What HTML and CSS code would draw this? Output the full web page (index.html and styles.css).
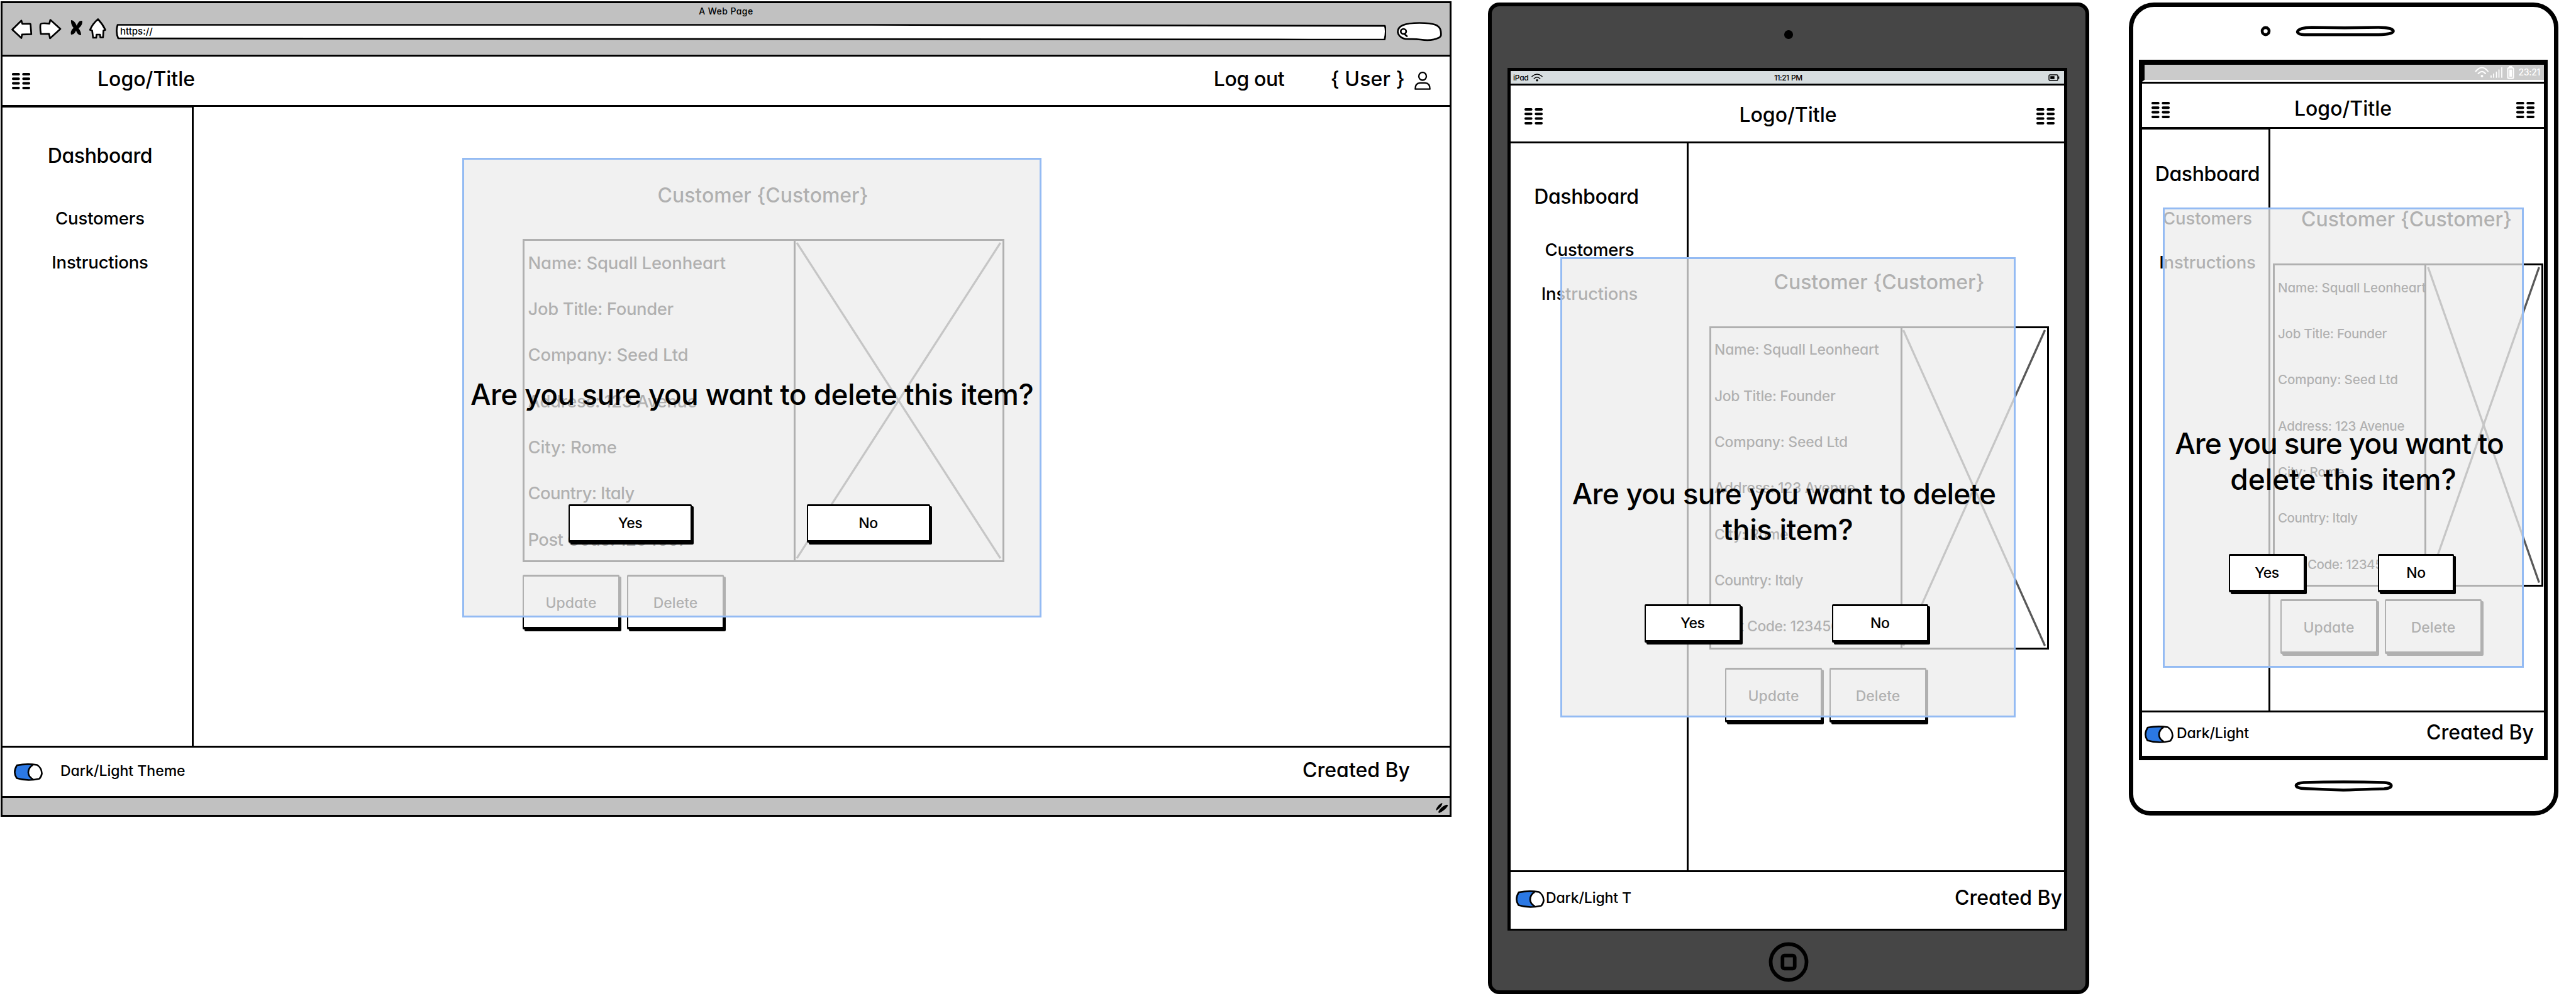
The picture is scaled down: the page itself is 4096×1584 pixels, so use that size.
FILE: index.html
```html
<!DOCTYPE html>
<html lang="en">
<head>
<meta charset="utf-8">
<title>Delete customer wireframes</title>
<link rel="stylesheet" href="styles.css">
</head>
<body>
<svg class="defs" width="0" height="0" aria-hidden="true">
  <symbol id="menu" viewBox="0 0 29 26">
    <g fill="#000">
      <rect x="0" y="0" width="12.6" height="4" rx="1.8"/><rect x="16.4" y="0" width="12.6" height="4" rx="1.8"/>
      <rect x="0" y="7.3" width="12.6" height="4" rx="1.8"/><rect x="16.4" y="7.3" width="12.6" height="4" rx="1.8"/>
      <rect x="0" y="14.6" width="12.6" height="4" rx="1.8"/><rect x="16.4" y="14.6" width="12.6" height="4" rx="1.8"/>
      <rect x="0" y="21.9" width="12.6" height="4" rx="1.8"/><rect x="16.4" y="21.9" width="12.6" height="4" rx="1.8"/>
    </g>
  </symbol>
  <symbol id="toggle" viewBox="0 0 47 28">
    <path d="M6 3Q22 0 38 2.5Q45 7 46 16Q45 21 41.4 24.6Q22 29 5.5 23.5Q-1 14 6 3Z" fill="#2b78e4"/>
    <path d="M31 2.6Q24 7 24 14.5Q24 21 31.5 25.5L41.4 24.6Q45 21 46 16Q45 7 38 2.5Z" fill="#fff"/>
    <path d="M6 3Q22 0 38 2.5Q45 7 45.6 16Q45 21 41.4 24.6Q22 29 5.5 23.5Q-1 14 6 3ZM31 2.6Q24 7 24 14.5Q24 21 31.5 25.5" fill="none" stroke="#000" stroke-width="2.6" stroke-linejoin="round"/>
  </symbol>
</svg>

<main class="board">

  <section class="browser">
    <div class="chrome">
      <div class="chrome-title">A Web Page</div>
      <div class="chrome-tools">
        <svg class="back" width="34" height="32" viewBox="0 0 34 32"><path d="M1.5 16L16 1.8L17.5 7L29 6.8Q30.5 6.8 30.6 8L31.8 23.4L17 23.8L16 29.6Z"/></svg>
        <svg class="forward" width="36" height="33" viewBox="0 0 36 33"><path d="M34 16L18 1.6L16.5 7.6Q3 5.800 2.300 9Q1.500 15 3 24L16 23.800L17.500 31Z"/></svg>
        <svg class="stop" width="19" height="25" viewBox="0 0 19 25"><path class="ink" d="M1 0C5 0 8 4 10 9C12 4 14 .5 18.500 1C20 6 16 11 13 13C15 16 17 19 17 24C13 24 10 21 9 16.500C7 21 5 23 1 23C-.5 18 3 14 5 12.500C2 9 .5 5 1 0Z"/></svg>
        <svg class="home" width="27" height="33" viewBox="0 0 27 33"><path d="M13.800 1.500Q21 9 25.500 18.500L22.500 19.500L21.800 30.500L17.600 30.500L17 26H11.500L11 31L6 31L4.500 19.500L1.200 18.500Q5 9 13.800 1.500Z"/></svg>
        <div class="url">
          <svg class="url-frame" width="2020" height="27" viewBox="0 0 2020 27"><path d="M3 2.500Q-.5 14 4 24L1900 26L2017.500 26.200Q2021 12 2018 4.200L1200 2.500Z"/></svg>
          <span class="url-text">https://</span>
        </div>
        <svg class="search" width="72" height="31" viewBox="0 0 72 31"><path d="M1.500 16C1.500 6 12 1.500 36 1.500C60 1.500 69 5 70 15C70.500 20 71 23 67 25C58 29.500 48 29.500 38 28C28 26.500 22 27.500 14 27C6 26 2 20 1.500 16Z"/><ellipse class="lens" cx="10.600" cy="15" rx="4.300" ry="4"/><path class="lens" d="M12 19L16 22.500"/></svg>
      </div>
    </div>

    <header class="bar">
      <svg class="menu-icon" width="29" height="26"><use href="#menu"/></svg>
      <div class="logo">Logo/Title</div>
      <div class="logout">Log out</div>
      <div class="user">{ User }</div>
      <svg class="person" width="26" height="30" viewBox="0 0 26 30"><g fill="none" stroke="#000" stroke-width="2.300" stroke-linejoin="round"><ellipse cx="13" cy="7.300" rx="6" ry="6.200"/><path d="M1.300 27.700C1.300 20.500 5 18 9 17.800H17C21 18 24.700 20.500 24.700 27.700Z"/></g></svg>
    </header>

    <div class="body">
      <nav class="side">
        <div class="side-title">Dashboard</div>
        <div class="side-link">Customers</div>
        <div class="side-link">Instructions</div>
      </nav>
      <div class="content">
        <h1 class="title">Customer {Customer}</h1>
        <div class="card">
          <div class="rows">
            <div class="row name">Name: Squall Leonheart</div>
            <div class="row job">Job Title: Founder</div>
            <div class="row company">Company: Seed Ltd</div>
            <div class="row address">Address: 123 Avenue</div>
            <div class="row city">City: Rome</div>
            <div class="row country">Country: Italy</div>
            <div class="row post">Post Code: 1234567</div>
          </div>
          <svg class="picture" viewBox="0 0 100 100" preserveAspectRatio="none"><path d="M.6 .6L99 99.400M99 .6L.6 99.400"/></svg>
        </div>
        <div class="actions"><div class="button">Update</div><div class="button">Delete</div></div>
      </div>
    </div>

    <footer class="foot">
      <svg class="toggle" width="47" height="28"><use href="#toggle"/></svg>
      <div class="theme">Dark/Light Theme</div>
      <div class="created">Created By</div>
    </footer>
    <div class="status"><svg class="grip" width="20" height="16" viewBox="0 0 20 16"><path d="M.3 11.500C1 7 5 2 10 0L10.500 1C9 6 5 9.500 1 11.800ZM4 14.500C6 9 12 4 18 2.800L19.500 4C16 10 10 14 5 16Z"/></svg></div>

    <div class="dialog">
      <p class="question">Are you sure you want to delete this item?</p>
      <div class="choices"><div class="button yes">Yes</div><div class="button no">No</div></div>
    </div>
  </section>

  <section class="tablet">
    <div class="bezel-top"><div class="lens-dot"></div></div>
    <div class="screen">
      <div class="tab-status">
        <span class="ipad">iPad</span>
        <svg class="wifi" width="18" height="13" viewBox="0 0 18 13"><g fill="none" stroke="#000" stroke-width="1.500" stroke-linecap="round"><path d="M1 4.500Q9-2.500 17 4.500M4.300 8Q9 3.500 13.700 8"/></g><circle cx="9" cy="10.800" r="1.800"/></svg>
        <span class="clock">11:21 PM</span>
        <svg class="battery" width="18" height="11" viewBox="0 0 18 11"><rect x="1" y="1" width="14" height="9" rx="1.500" fill="none" stroke="#000" stroke-width="1.400"/><rect x="3.200" y="3.200" width="6.500" height="4.600"/><path d="M16.500 3.500V7.500" stroke="#000" stroke-width="1.600"/></svg>
      </div>
      <header class="bar">
        <svg class="menu-icon" width="29" height="26"><use href="#menu"/></svg>
        <div class="logo">Logo/Title</div>
        <svg class="menu-icon" width="29" height="26"><use href="#menu"/></svg>
      </header>
      <div class="body">
        <nav class="side">
          <div class="side-title">Dashboard</div>
          <div class="side-link">Customers</div>
          <div class="side-link">Instructions</div>
        </nav>
        <div class="content">
          <h1 class="title">Customer {Customer}</h1>
          <div class="card">
            <div class="rows">
              <div class="row name">Name: Squall Leonheart</div>
              <div class="row job">Job Title: Founder</div>
              <div class="row company">Company: Seed Ltd</div>
              <div class="row address">Address: 123 Avenue</div>
              <div class="row city">City: Rome</div>
              <div class="row country">Country: Italy</div>
              <div class="row post">Post Code: 1234567</div>
            </div>
            <svg class="picture" viewBox="0 0 100 100" preserveAspectRatio="none"><path d="M.6 .6L98.500 99.400M98.500 .6L.6 99.400"/></svg>
          </div>
          <div class="actions"><div class="button">Update</div><div class="button">Delete</div></div>
        </div>
      </div>
      <footer class="foot">
        <svg class="toggle" width="47" height="28"><use href="#toggle"/></svg>
        <div class="theme">Dark/Light T</div>
        <div class="created">Created By</div>
      </footer>
    </div>
    <div class="bezel-bottom"><svg class="home-key" width="64" height="64" viewBox="0 0 64 64"><g fill="none" stroke="#000" stroke-width="5.800"><circle cx="32" cy="32" r="28.500"/><rect x="22.300" y="21.700" width="19.400" height="20.600" rx="3"/></g></svg></div>

    <div class="dialog">
      <p class="question"><span class="line-1">Are you sure you want to delete</span><span class="line-2">this item?</span></p>
      <div class="choices"><div class="button yes">Yes</div><div class="button no">No</div></div>
    </div>
  </section>

  <section class="phone">
    <div class="bezel-top">
      <svg class="camera" width="17" height="17" viewBox="0 0 17 17"><ellipse cx="8.500" cy="8.500" rx="5.500" ry="5.600" fill="#fff" stroke="#000" stroke-width="4.600"/></svg>
      <svg class="speaker" width="158" height="17" viewBox="0 0 158 17"><path d="M26 2.500L78 3.300L132 2.500C146 2.500 155.500 5 155.500 8.500C155.500 12 146 14 132 14.200H14C-2 14-2 3 26 2.500Z" fill="#fff" stroke="#000" stroke-width="4.600"/></svg>
    </div>
    <div class="screen">
      <div class="phone-status">
        <svg class="signals" width="64" height="21" viewBox="0 0 64 21"><g fill="none" stroke="#fff" stroke-width="2" stroke-linecap="round"><path d="M1.500 8.500Q11.500-3.500 21 8.500M5.500 12Q11.500 5.500 17 12"/><path stroke-width="1.700" d="M26 18V15.500M30 18V12.500M34.500 18V9.500M38.500 18V6M43 18V2.500"/><rect x="52.500" y="3" width="9" height="16.500" rx="1.500"/></g><circle cx="11.500" cy="16" r="2" fill="#fff"/><rect x="54.500" y="0" width="5" height="3" fill="#fff"/><rect x="54.800" y="5.500" width="4.400" height="11.500" fill="#fff"/></svg>
        <span class="clock">23:21</span>
      </div>
      <header class="bar">
        <svg class="menu-icon" width="29" height="26"><use href="#menu"/></svg>
        <div class="logo">Logo/Title</div>
        <svg class="menu-icon" width="29" height="26"><use href="#menu"/></svg>
      </header>
      <div class="body">
        <nav class="side">
          <div class="side-title">Dashboard</div>
          <div class="side-link">Customers</div>
          <div class="side-link">Instructions</div>
        </nav>
        <div class="content">
          <h1 class="title">Customer {Customer}</h1>
          <div class="card">
            <div class="rows">
              <div class="row name">Name: Squall Leonheart</div>
              <div class="row job">Job Title: Founder</div>
              <div class="row company">Company: Seed Ltd</div>
              <div class="row address">Address: 123 Avenue</div>
              <div class="row city">City: Rome</div>
              <div class="row country">Country: Italy</div>
              <div class="row post">Post Code: 1234567</div>
            </div>
            <svg class="picture" viewBox="0 0 100 100" preserveAspectRatio="none"><path d="M1.500 .6L98 99.400M98 .6L1.500 99.400"/></svg>
          </div>
          <div class="actions"><div class="button">Update</div><div class="button">Delete</div></div>
        </div>
      </div>
      <footer class="foot">
        <svg class="toggle" width="47" height="28"><use href="#toggle"/></svg>
        <div class="theme">Dark/Light</div>
        <div class="created">Created By</div>
      </footer>
    </div>
    <div class="bezel-bottom"><svg class="home-key" width="158" height="18" viewBox="0 0 158 18"><path d="M15 3.500Q78 1.500 143 3.500C158 4.500 158 12.500 143 13.500Q120 14 78 15.500Q40 14 18 13.300C-2 12.500-1 4.500 15 3.500Z" fill="#fff" stroke="#000" stroke-width="4.600"/></svg></div>

    <div class="dialog">
      <p class="question"><span class="line-1">Are you sure you want to</span><span class="line-2">delete this item?</span></p>
      <div class="choices"><div class="button yes">Yes</div><div class="button no">No</div></div>
    </div>
  </section>

</main>
</body>
</html>
```
FILE: styles.css
```css
* { box-sizing: border-box; }

body {
  margin: 0;
  background: #fff;
  color: #000;
  font-family: Inter, "Open Sans", sans-serif;
  font-weight: 500;
  font-feature-settings: "cv11";
  font-size: 23px;
}

h1, p { margin: 0; font-weight: inherit; }
svg { display: block; flex: none; }
.defs { position: absolute; }

.board {
  display: flex;
  align-items: flex-start;
  width: 4096px;
  height: 1584px;
  overflow: hidden;
}

/* ---------- shared pieces ---------- */

.bar, .foot { display: flex; align-items: center; background: #fff; flex: none; }
.logo, .logout, .user, .side-title, .created, .title {
  font-size: 32px;
  line-height: 40px;
  white-space: nowrap;
}
.logout { letter-spacing: -.012em; }
.user { letter-spacing: .005em; }
.theme { white-space: nowrap; line-height: 30px; }
.created { margin-left: auto; }

.body { display: flex; background: #fff; flex: none; }
.side {
  display: flex;
  flex-direction: column;
  align-items: center;
  flex: none;
  border-right: 3px solid #000;
}
.side-title { letter-spacing: -.011em; }
.side-link { font-size: 27.5px; line-height: 34px; letter-spacing: -.006em; }
.side-link + .side-link { margin-top: 36px; }

.content { flex: 1; min-width: 0; }
.title { text-align: center; letter-spacing: -.001em; }
.card { display: flex; border: 3px solid #000; }
.rows { flex: none; border-right: 3px solid #000; overflow: hidden; }
.row { height: 73.35px; line-height: 73.35px; white-space: nowrap; position: relative; top: -1.3px; }
.name { letter-spacing: -.007em; }
.job { letter-spacing: -.0146em; }
.company { letter-spacing: -.0073em; }
.address { letter-spacing: -.014em; }
.city { letter-spacing: -.0068em; }
.country { letter-spacing: -.025em; }
.post { letter-spacing: -.0217em; }
.picture { flex: 1; min-width: 0; height: 100%; }
.picture path { fill: none; stroke: #595959; stroke-width: 3.3px; vector-effect: non-scaling-stroke; }

.actions { display: flex; gap: 12px; }
.button {
  display: flex;
  align-items: center;
  justify-content: center;
  background: #fff;
  border: 2px solid #000;
  border-width: 3px 2px 4px;
  border-radius: 2px;
  box-shadow: 3px 3px 0 #000;
  line-height: 30px;
}
.actions .button { width: 154px; height: 87px; padding-top: 3px; }

.dialog {
  position: absolute;
  border: 3px solid #94bbf3;
  background: rgba(236, 236, 236, .745);
}
.question {
  font-size: 46px;
  line-height: 57.500px;
  text-align: center;
  white-space: nowrap;
  letter-spacing: -.013em;
}
.question span { display: block; }
.choices { display: flex; }
.choices .button { height: 61px; letter-spacing: -.02em; }

/* ---------- browser window ---------- */

.browser {
  position: relative;
  flex: none;
  width: 2307px;
  height: 1297px;
  margin: 2px 0 0 1px;
  border: 3px solid #000;
}
.chrome { height: 85px; background: #c1c1c1; border-bottom: 3px solid #000; }
.chrome-title { font-size: 14px; line-height: 26px; text-align: center; letter-spacing: .03em; }
.chrome-tools { display: flex; align-items: flex-start; padding-left: 14px; }
.chrome-tools path, .chrome-tools ellipse { fill: #fff; stroke: #000; stroke-width: 2.700px; stroke-linejoin: round; stroke-linecap: round; }
.chrome-tools .ink { fill: #000; stroke: none; }
.chrome-tools .lens { fill: none; }
.forward { margin-left: 10px; margin-top: -1px; }
.stop { margin-left: 14px; margin-top: 1px; }
.home { margin-left: 11px; margin-top: -2px; }
.url { position: relative; width: 2020px; height: 27px; margin: 6px 0 0 15px; }
.url-frame { position: absolute; left: 0; top: 0; }
.url-text { position: relative; display: block; padding-left: 7px; font-size: 15px; line-height: 25px; }
.search { margin: 4px 0 0 17px; }

.browser .bar { height: 80px; padding: 0 30px 0 15px; border-bottom: 3px solid #000; }
.browser .logo { margin: -5px 0 0 107px; }
.browser .logout { margin: -5px 0 0 auto; }
.browser .user { margin: -5px 0 0 73px; }
.person { margin-left: 15px; }

.browser .body { height: 1016px; }
.browser .side { width: 304px; border-top: 1px solid #000; padding: 57px 0 0 9px; }
.browser .side-title { margin-bottom: 62px; }
.browser .content { padding: 120.500px 0 0 523px; }
.browser .title { width: 764px; margin-bottom: 49.500px; }
.browser .card { width: 766px; height: 514px; }
.browser .rows { width: 431px; padding-left: 5.500px; font-size: 27.500px; }
.browser .actions { margin-top: 20px; }

.browser .foot { height: 83px; padding: 0 63px 0 17px; border-top: 3px solid #000; border-bottom: 3px solid #000; }
.browser .theme { margin: -3px 0 0 28px; }
.browser .created { margin-top: -5px; }
.status { display: flex; justify-content: flex-end; height: 27px; padding: 8px 2px 0 0; background: #c1c1c1; }

.browser .dialog { left: 731px; top: 246px; width: 921px; height: 731px; }
.browser .question { padding-top: 344.500px; }
.browser .choices { margin-top: 146px; padding-left: 166px; gap: 182.500px; }
.browser .choices .button { width: 196px; }

/* ---------- tablet ---------- */

.tablet {
  position: relative;
  display: flex;
  flex-direction: column;
  flex: none;
  width: 956px;
  height: 1577px;
  margin: 4px 0 0 58px;
  border: 6px solid #000;
  border-radius: 18px;
  background: #464646;
}
.tablet .bezel-top { display: flex; justify-content: center; height: 98px; padding-top: 38px; flex: none; }
.lens-dot { width: 13.500px; height: 13.500px; border-radius: 50%; background: #000; }
.tablet .screen {
  flex: none;
  width: 890px;
  height: 1372px;
  margin-left: 25px;
  border: 5px solid #000;
  border-bottom-width: 3px;
}
.tab-status { display: flex; align-items: center; height: 20px; padding: 0 7px 0 4px; background: #d7dee0; font-size: 13px; line-height: 19px; }
.ipad { width: 25px; font-size: 12px; letter-spacing: -.02em; }
.wifi { margin-left: 4px; }
.tab-status .clock { margin-left: 368px; font-size: 12px; letter-spacing: -.04em; word-spacing: .06em; margin-right: auto; }

.tablet .bar { height: 95px; padding: 9px 15px 0 22px; border-top: 3px solid #000; border-bottom: 3px solid #000; }
.tablet .logo, .phone .logo { flex: 1; text-align: center; margin-top: -5px; }
.tablet .logo { padding-right: 5px; }
.tablet .body { height: 1156px; }
.tablet .side { width: 283px; padding: 65px 29px 0 0; }
.tablet .side-title { margin: 0 10px 47px 0; }
.tablet .content { padding: 200.500px 0 0 33px; }
.tablet .title { width: 540px; margin-bottom: 50px; }
.tablet .card { width: 540px; height: 514px; }
.tablet .rows { width: 304px; padding-left: 5px; font-size: 22.900px; }
.tablet .actions { margin: 29.500px 0 0 25px; }

.tablet .foot { height: 93px; padding: 0 3px 0 7px; border-top: 3px solid #000; }
.tablet .toggle { margin-top: -5px; }
.tablet .theme { margin: -8px 0 0 2px; letter-spacing: -.005em; }
.tablet .created { margin-top: -9px; }
.tablet .bezel-bottom { display: flex; justify-content: center; padding-top: 18px; }

.tablet .dialog { left: 109px; top: 399px; width: 724px; height: 732px; }
.tablet .question { padding-top: 344.600px; }
.tablet .line-1 { letter-spacing: -.0165em; margin-left: -13px; }
.tablet .line-2 { letter-spacing: -.009em; }
.tablet .choices { margin-top: 89px; padding-left: 130.500px; gap: 144.500px; }
.tablet .choices .button { width: 153.500px; }

/* ---------- phone ---------- */

.phone {
  position: relative;
  display: flex;
  flex-direction: column;
  flex: none;
  width: 683px;
  height: 1293px;
  margin: 4px 0 0 63px;
  border: 7px solid #000;
  border-radius: 40px 40px 38px 34px;
  background: #fff;
}
.phone .bezel-top { display: flex; height: 84px; padding: 30px 0 0 201.500px; flex: none; }
.speaker { margin-left: 39.500px; }
.phone .screen {
  flex: none;
  width: 650px;
  height: 1114px;
  margin-left: 9px;
  border: 8px solid #000;
  border-width: 8px 6px 7px 5px;
}
.phone-status {
  display: flex;
  align-items: center;
  justify-content: flex-end;
  height: 27px;
  padding-right: 6px;
  border-left: 4px solid #000;
  border-bottom: 3px solid #fff;
  background: #cbcbcb;
  background-clip: padding-box;
  color: #fff;
  font-size: 14px;
  line-height: 24px;
}
.phone-status .clock { margin-left: 6px; letter-spacing: -.023em; }

.phone .bar { height: 75px; padding: 15px 15px 0; border-top: 3px solid #000; border-bottom: 3px solid #000; }
.phone .body { height: 925px; }
.phone .side { width: 204px; padding: 51px 0 0 7px; border-top: 1px solid #000; }
.phone .side-title { margin-bottom: 32.500px; }
.phone .content { padding: 124px 0 0 4px; }
.phone .title { width: 425px; margin-bottom: 50px; }
.phone .card { width: 430px; height: 513.500px; }
.phone .rows { width: 241px; padding-left: 5px; font-size: 20.600px; }
.phone .actions { margin: 20.500px 0 0 12px; }

.phone .foot { height: 72px; padding: 0 16px 0 3px; border-top: 3px solid #000; }
.phone .theme { margin: -4px 0 0 5px; letter-spacing: -.005em; }
.phone .created { margin-top: -5px; }
.phone .bezel-bottom { display: flex; justify-content: center; padding-top: 32px; }

.phone .dialog { left: 47px; top: 319px; width: 574px; height: 732px; }
.phone .question { padding-top: 343.600px; }
.phone .line-1 { letter-spacing: -.0236em; margin-left: -13px; }
.phone .line-2 { letter-spacing: 0; }
.phone .choices { margin-top: 89.500px; padding-left: 102px; gap: 116px; }
.phone .choices .button { width: 121px; }
```
